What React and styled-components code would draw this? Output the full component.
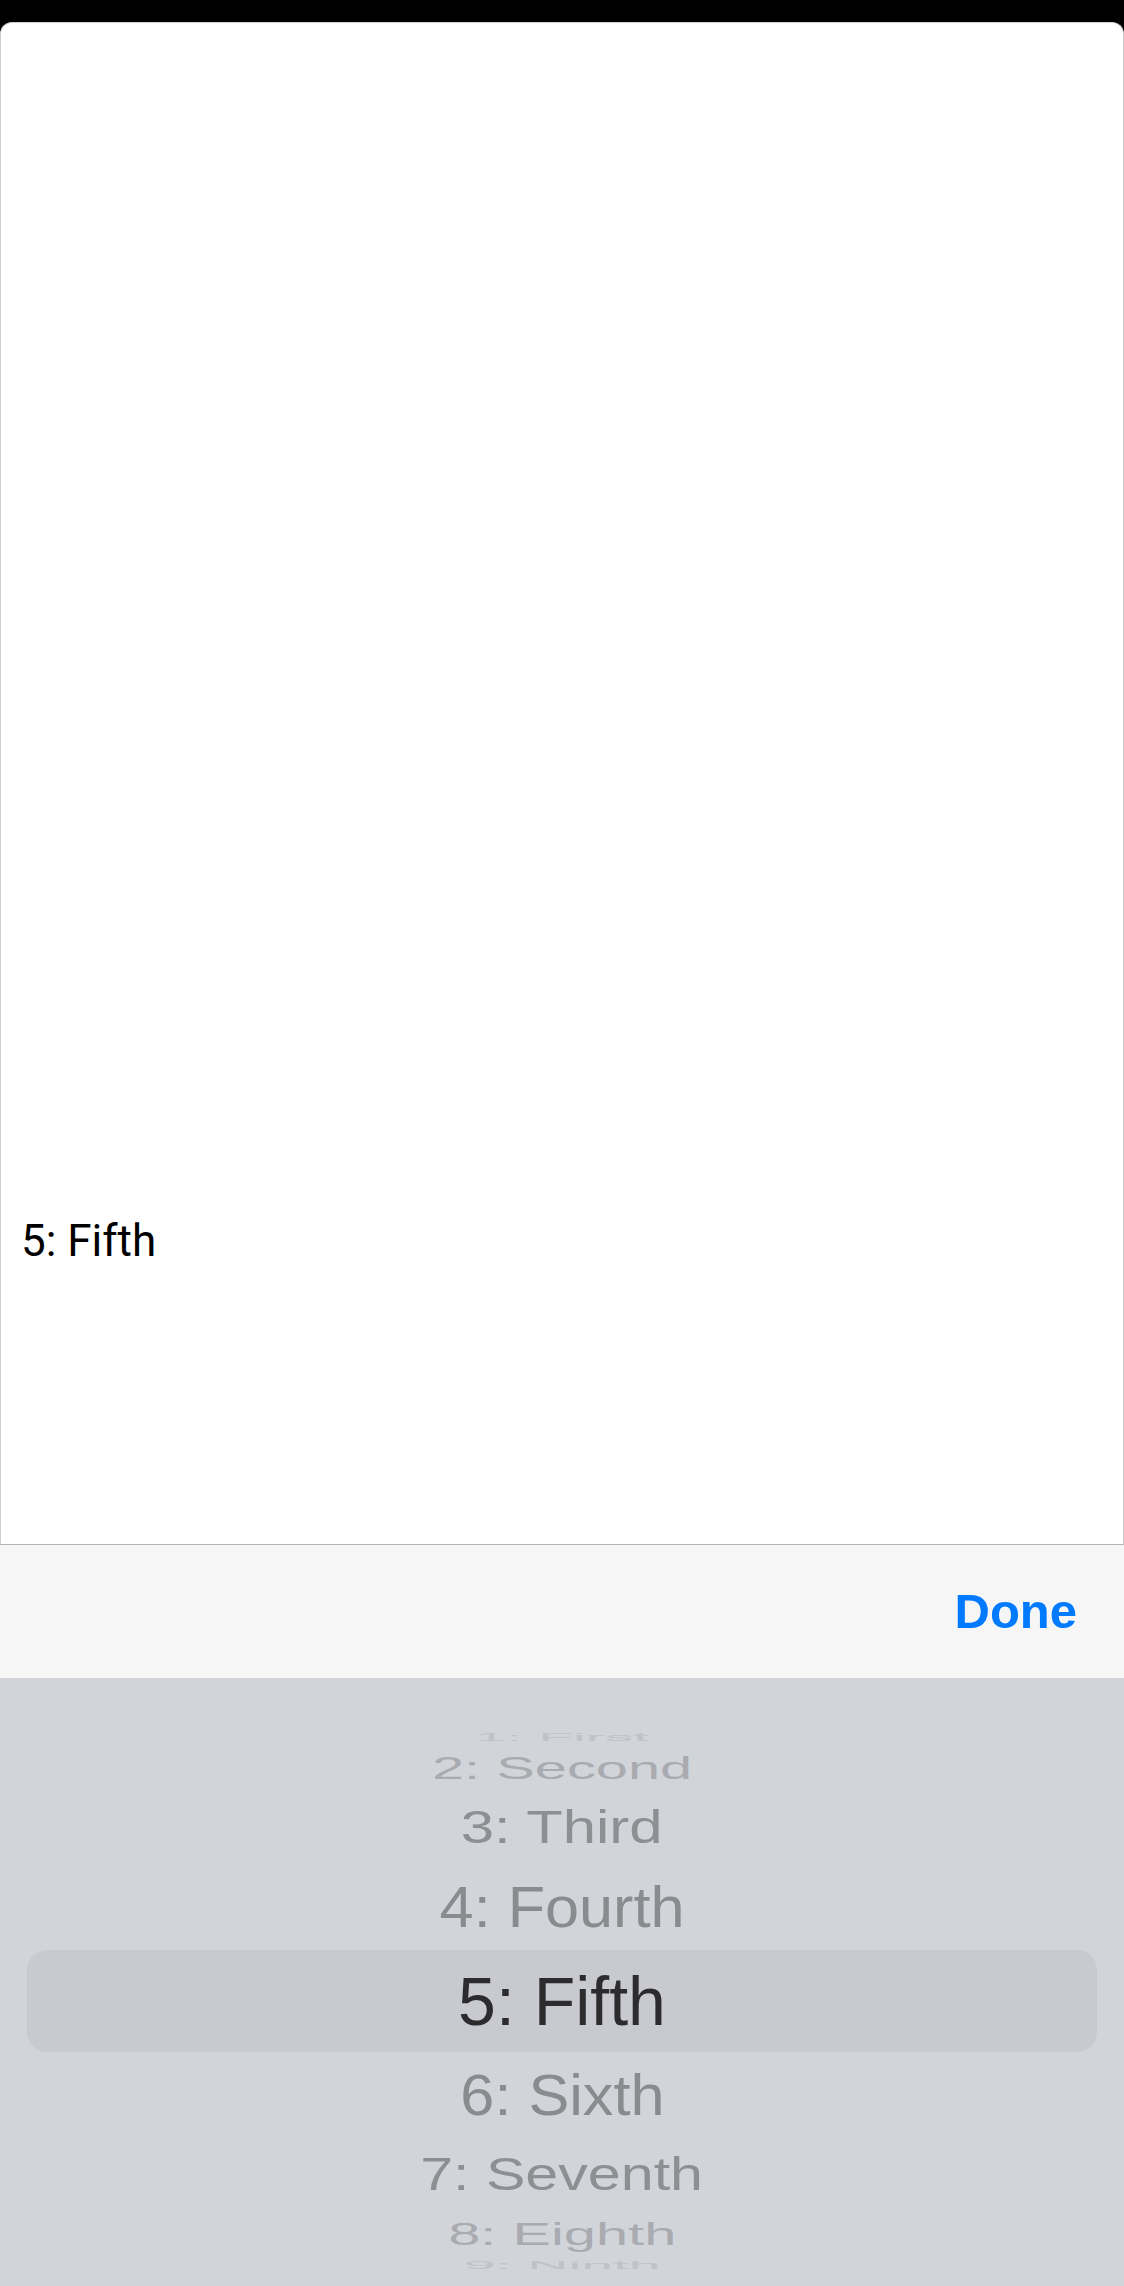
import React from "react";
import styled, { createGlobalStyle } from "styled-components";

const Global = createGlobalStyle`
  html, body { margin: 0; padding: 0; background: #000; }
  body { overflow: hidden; }
  #root { height: 2286px; }
`;

const Page = styled.div`
  display: flex;
  flex-direction: column;
  height: 2286px;
  width: 1124px;
  background: #000;
`;

const StatusBar = styled.div`
  height: 22px;
  flex: none;
  background: #000;
`;

const Sheet = styled.div`
  flex: 1;
  background: #fff;
  border: 1px solid #cfcfcf;
  border-bottom-color: #b4b4b4;
  border-radius: 12px 12px 0 0;
  padding: 1193px 0 0 20px;
  box-sizing: border-box;
`;

const Value = styled.div`
  font-family: Roboto, "Liberation Sans", sans-serif;
  font-size: 44px;
  line-height: 50px;
  color: #000;
`;

const Toolbar = styled.div`
  height: 133px;
  flex: none;
  background: #f6f6f6;
  display: flex;
  align-items: center;
  justify-content: flex-end;
  padding-right: 47px;
  box-sizing: border-box;
`;

const DoneButton = styled.button`
  border: none;
  background: none;
  padding: 0;
  font-family: "Liberation Sans", Arial, sans-serif;
  font-weight: 700;
  font-size: 49px;
  color: #007aff;
  line-height: 1;
`;

const Wheel = styled.div`
  height: 608px;
  flex: none;
  background: #d1d4d9;
  display: flex;
  flex-direction: column;
  padding-top: 51px;
  box-sizing: border-box;
  overflow: hidden;
`;

const Row = styled.div`
  height: ${(p) => p.$h}px;
  flex: none;
  display: flex;
  align-items: center;
  justify-content: center;
  overflow: hidden;
  margin: 0 27px;
  border-radius: ${(p) => (p.$selected ? "20px" : "0")};
  background: ${(p) => (p.$selected ? "#c9cacf" : "transparent")};
`;

const Label = styled.span`
  font-family: "Liberation Sans", Arial, sans-serif;
  font-size: 68px;
  line-height: 1;
  white-space: nowrap;
  color: ${(p) => p.$color};
  transform: scale(${(p) => p.$sx}, ${(p) => p.$sy});
`;

const items = [
  { t: "1: First", h: 16, sx: 0.84, sy: 0.16, c: "#bfc2c6" },
  { t: "2: Second", h: 46, sx: 0.85, sy: 0.45, c: "#a9abb0" },
  { t: "3: Third", h: 72, sx: 0.88, sy: 0.68, c: "#8e8f93" },
  { t: "4: Fourth", h: 87, sx: 0.9, sy: 0.84, c: "#8a8b8f" },
  { t: "5: Fifth", h: 102, sx: 1, sy: 1, c: "#2c2c2e", sel: true },
  { t: "6: Sixth", h: 86, sx: 0.9, sy: 0.84, c: "#8a8b8f" },
  { t: "7: Seventh", h: 72, sx: 0.87, sy: 0.68, c: "#8e8f93" },
  { t: "8: Eighth", h: 47, sx: 0.85, sy: 0.45, c: "#a9abb0" },
  { t: "9: Ninth", h: 16, sx: 0.84, sy: 0.16, c: "#bfc2c6" },
];

export default function App() {
  return (
    <>
      <Global />
      <Page>
        <StatusBar />
        <Sheet>
          <Value>5: Fifth</Value>
        </Sheet>
        <Toolbar>
          <DoneButton>Done</DoneButton>
        </Toolbar>
        <Wheel>
          {items.map((it) => (
            <Row key={it.t} $h={it.h} $selected={it.sel}>
              <Label $color={it.c} $sx={it.sx} $sy={it.sy}>
                {it.t}
              </Label>
            </Row>
          ))}
        </Wheel>
      </Page>
    </>
  );
}
